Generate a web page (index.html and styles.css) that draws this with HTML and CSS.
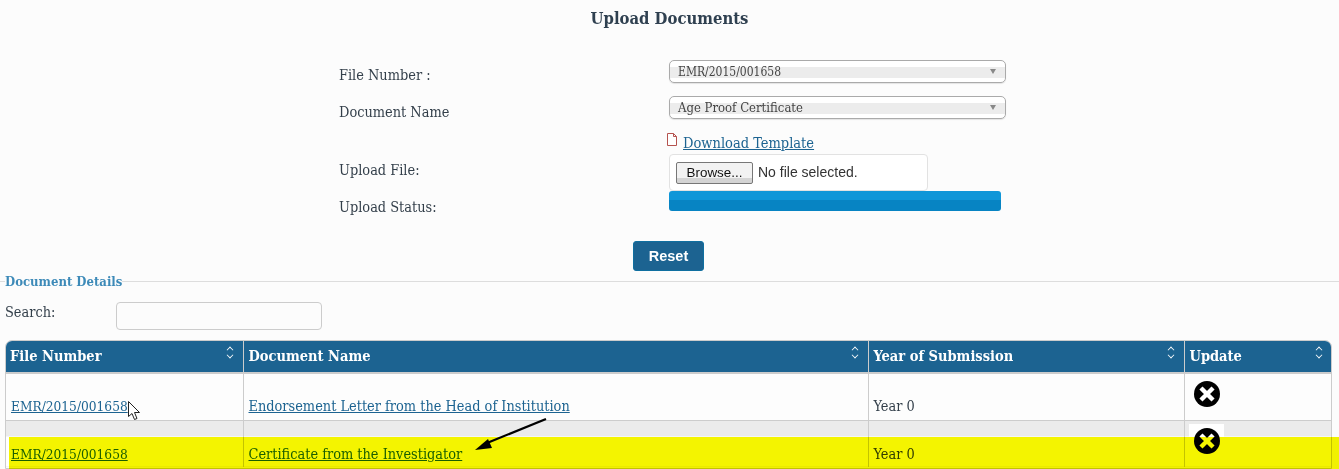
FILE: index.html
```html
<!DOCTYPE html>
<html lang="en">
<head>
<meta charset="utf-8">
<title>Upload Documents</title>
<link rel="stylesheet" href="styles.css">
</head>
<body>
<main class="page">
  <h1 class="title">Upload Documents</h1>
  <form class="form">
    <div class="row row-file"><label>File Number :</label>
      <div class="select"><span>EMR/2015/001658</span><i class="caret"></i></div></div>
    <div class="row row-doc"><label>Document Name</label>
      <div class="select select-doc"><span>Age Proof Certificate</span><i class="caret"></i></div></div>
    <div class="row row-tpl"><span></span>
      <div class="tpl">
        <svg class="file-icon" width="10" height="13" viewBox="0 0 10 13"><path d="M.5.5h6l3 3v9H.5zM6.5.5v3h3" fill="#fff" stroke="#b5534f"/></svg>
        <a href="#">Download Template</a></div></div>
    <div class="row row-up"><label>Upload File:</label>
      <div class="filebox"><button type="button" class="browse">Browse...</button><span class="nofile">No file selected.</span></div></div>
    <div class="row row-status"><label>Upload Status:</label><div class="progress"></div></div>
    <div class="actions"><button type="button" class="reset">Reset</button></div>
  </form>

  <section class="details">
    <div class="legend"><span>Document Details</span></div>
    <div class="search"><label>Search:</label><div class="search-input"></div></div>
    <div class="table-wrap">
    <table>
      <colgroup><col class="c1"><col class="c2"><col class="c3"><col class="c4"></colgroup>
      <thead><tr>
        <th>File Number<span class="sort"></span></th>
        <th>Document Name<span class="sort"></span></th>
        <th>Year of Submission<span class="sort"></span></th>
        <th>Update<span class="sort"></span></th>
      </tr></thead>
      <tbody>
        <tr><td><a class="num" href="#">EMR/2015/001658</a></td><td><a href="#">Endorsement Letter from the Head of Institution</a></td><td>Year 0</td>
          <td class="upd"><svg class="x" width="26" height="26" viewBox="0 0 26 26"><circle cx="13" cy="13" r="13" fill="#000"/><path d="M8.5 8.5l9 9M17.5 8.5l-9 9" stroke="#fff" stroke-width="4.4" stroke-linecap="square"/></svg></td></tr>
        <tr class="alt"><td><a class="num" href="#">EMR/2015/001658</a></td><td><a href="#">Certificate from the Investigator</a></td><td>Year 0</td>
          <td class="upd"><span class="xbox"><svg class="x" width="26" height="26" viewBox="0 0 26 26"><circle cx="13" cy="13" r="13" fill="#000"/><path d="M8.5 8.5l9 9M17.5 8.5l-9 9" stroke="#fff" stroke-width="4.4" stroke-linecap="square"/></svg></span></td></tr>
      </tbody>
    </table>
    </div>
  </section>
</main>
<div class="highlight"></div>
<svg class="arrow" width="80" height="36" viewBox="0 0 80 36"><path d="M71 1L12 25" stroke="#000" stroke-width="2.2"/><path d="M0 32L13 21l4 9z" fill="#000"/></svg>
<svg class="cursor" width="13" height="20" viewBox="0 0 13 20"><path d="M.5.5v15l3.5-3 2.5 6 2.5-1-2.5-6h5z" fill="#fff" stroke="#222" stroke-width="1"/></svg>
</body>
</html>
```
FILE: styles.css
```css
html, body { margin: 0; padding: 0; }
body {
  width: 1339px; height: 469px; overflow: hidden; position: relative;
  background: #fcfcfc; color: #333f4a;
  font-family: "DejaVu Serif Condensed", "DejaVu Serif", serif;
  font-size: 14.4px; font-stretch: condensed;
}
a { color: #1c6391; }
.title { margin: 0; padding-top: 9px; height: 27px; line-height: 19px; text-align: center; font-size: 16.5px; font-weight: bold; color: #2f4050; }
.form { padding-left: 339px; padding-top: 24px; }
.row { display: grid; grid-template-columns: 330px auto; justify-content: start; }
.row label { line-height: 20px; }
.row-file { height: 36px; }
.row-file label { padding-top: 5px; }
.row-doc { height: 36px; }
.row-doc label { padding-top: 6px; }
.row-tpl { height: 22px; align-items: end; }
.row-up { height: 37px; }
.row-up label { padding-top: 6px; }
.row-status { height: 36px; }
.row-status label { padding-top: 6px; }
.select {
  width: 337px; height: 23px; box-sizing: border-box; border: 1px solid #aaa; border-radius: 5px;
  background: linear-gradient(#fff 0 30%, #ececec 30% 80%, #fff 80%);
  box-shadow: 0 1px 1px rgba(0,0,0,.1);
  display: flex; align-items: center; justify-content: space-between; padding: 0 9px 0 8px;
  font-size: 12px; color: #444;
}
.select-doc { font-size: 13px; }
.caret { width: 0; height: 0; border: 3.5px solid transparent; border-top: 5px solid #888; border-bottom: 0; }
.tpl { display: flex; align-items: flex-start; gap: 6px; margin-left: -2px; line-height: 20px; height: 20px; position: relative; top: -1px; }
.tpl a { font-size: 14.5px; }
.filebox {
  width: 259px; height: 37px; box-sizing: border-box; border: 1px solid #e2e2e2; border-radius: 4px; background: #fff;
  display: flex; align-items: flex-start; gap: 5px; padding: 7px 6px 0;
  font-family: "Liberation Sans", Arial, sans-serif; font-size: 14px; color: #333;
}
.nofile { line-height: 20px; }
.browse {
  width: 77px; height: 22px; padding: 0 0 2px; font: 13.4px "Liberation Sans", Arial, sans-serif; color: #111;
  border: 1px solid #777; border-radius: 2px; background: linear-gradient(#f2f2f2 0 75%, #d4d4d4 75%);
}
.progress { width: 332px; height: 20px; border-radius: 3px; background: linear-gradient(#0f96d8 0 45%, #0784c3 45%); }
.actions { padding-left: 294px; height: 30px; margin-top: 14px; }
.reset {
  width: 71px; height: 30px; padding: 0; border: 1px solid #0f6fa0; border-radius: 3px; background: #1c6391; color: #fff;
  font: bold 14.5px "Liberation Sans", Arial, sans-serif;
}
.legend { height: 20px; padding-left: 5px; font-size: 13px; font-weight: bold; color: #3d8ab8; line-height: 22px; background: linear-gradient(#ddd,#ddd) 0 10px/100% 1px no-repeat; }
.legend span { background: #fcfcfc; display: inline-block; height: 20px; }
.search { display: flex; padding: 11px 0 0 5px; height: 29px; }
.search label { width: 111px; line-height: 20px; }
.search-input { width: 206px; height: 28px; box-sizing: border-box; border: 1px solid #ccc; border-radius: 4px; background: #fcfcfc; }
.table-wrap { margin: 9px 0 0 5px; width: 1327px; height: 129px; border: 1px solid #ccc; border-radius: 7px 7px 0 0; box-sizing: border-box; overflow: hidden; }
table { border-collapse: collapse; table-layout: fixed; width: 1327px; margin-left: -1px; }
col.c1 { width: 238px; } col.c2 { width: 625px; } col.c3 { width: 316px; } col.c4 { width: 148px; }
th {
  height: 29px; padding: 0 0 2px 5px; background: #1c6391; color: #fff; text-align: left; font-size: 14.5px; position: relative;
  border: solid #ccc; border-width: 0 0 2px 1px; box-sizing: content-box;
}
th:first-child, td:first-child { border-left: 0; }
td { height: 47px; box-sizing: border-box; padding: 22px 0 0 5px; line-height: 20px; border: 1px solid #ccc; border-top: 0; background: #fdfdfd; vertical-align: top; }
td:first-child { padding-left: 6px; }
.num { font-size: 13.6px; }
tr.alt td { background: linear-gradient(#ebebeb 0 16px, #fff 16px); border-bottom: 0; padding-top: 23px; }
.sort { position: absolute; right: 8px; top: 6px; width: 9px; height: 12px; }
.sort::before, .sort::after { content: ""; position: absolute; left: 1px; width: 5px; height: 5px; border: solid #fff; border-width: 1.5px 0 0 1.5px; transform: rotate(45deg) scale(.8); }
.sort::before { top: 0; }
.sort::after { top: 5px; transform: rotate(225deg) scale(.8); }
td.upd { padding: 7px 0 0 9px; position: relative; }
.x { display: block; }
tr.alt td.upd { padding: 0; }
.xbox { position: absolute; left: 4px; top: 3px; width: 35px; height: 36px; background: #fff; padding: 4px 0 0 5px; box-sizing: border-box; }
.highlight { position: absolute; left: 9px; top: 437px; width: 1330px; height: 32px; background: #f4f400; mix-blend-mode: multiply; }
.arrow { position: absolute; left: 475px; top: 418px; }
.cursor { position: absolute; left: 128px; top: 401px; }
```
